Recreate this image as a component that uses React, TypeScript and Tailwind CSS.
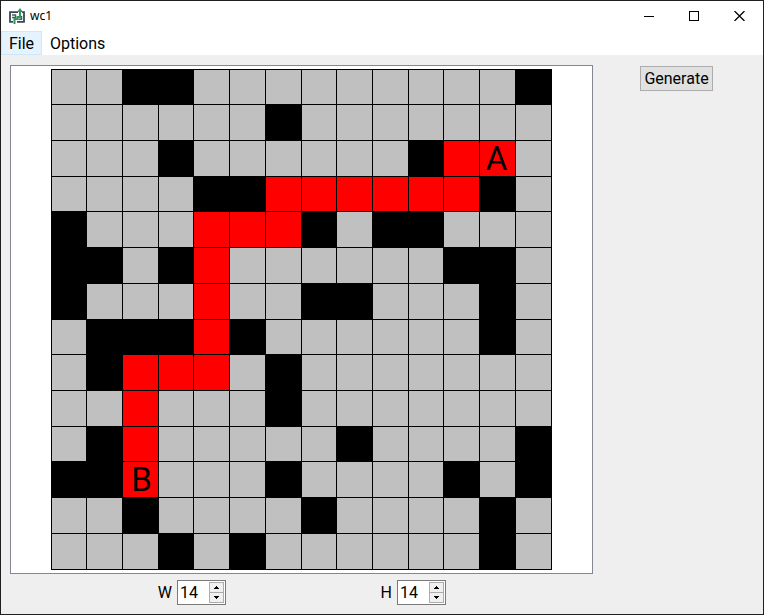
const MAP = [
  '..##.........#',
  '......#.......',
  '...#......#*A.',
  '....##******#.',
  '#...***#.##...',
  '##.#*......##.',
  '#...*..##...#.',
  '.###*#......#.',
  '.#***.#.......',
  '..*...#.......',
  '.#*.....#....#',
  '##B...#....#.#',
  '..#....#....#.',
  '...#.#......#.',
];

function cellColor(c: string) {
  if (c === '#') return 'bg-black';
  if (c === '.') return 'bg-[#c0c0c0]';
  return 'bg-[#ff0000]';
}

function Maze() {
  return (
    <div className="grid h-[501px] w-[501px] border-r border-b border-black grid-cols-[35px_36px_36px_35px_36px_36px_36px_35px_36px_36px_35px_36px_36px_36px] grid-rows-[35px_36px_36px_35px_36px_36px_36px_35px_36px_36px_35px_36px_36px_36px]">
      {MAP.flatMap((row, y) =>
        row.split('').map((c, x) => (
          <div
            key={`${x}-${y}`}
            className={`flex items-center justify-center border-t border-l border-black text-[33px] leading-none ${cellColor(c)} ${c === 'B' ? 'pl-[2px]' : ''} ${c === 'A' ? 'pr-[2px]' : ''}`}
          >
            {/[AB]/.test(c) ? c : null}
          </div>
        )),
      )}
    </div>
  );
}

function Spin({ label }: { label: string }) {
  return (
    <div className="flex items-center">
      <span className="w-[20px] pr-[5px] text-right text-base leading-none">{label}</span>
      <div className="flex h-[25px] w-[49px] border border-[#7a7a7a] bg-white p-px">
        <span className="flex flex-1 items-center pl-px text-base leading-none">14</span>
        <div className="flex w-[15px] flex-col">
          <div className="flex h-[11px] items-center justify-center border border-[#acacac] bg-[#f0f0f0]">
            <svg width="5" height="3" shapeRendering="crispEdges">
              <path d="M2 0h1v1h1v1h1v1H0V2h1V1h1z" />
            </svg>
          </div>
          <div className="-mt-px flex h-[11px] items-center justify-center border border-[#acacac] bg-[#f0f0f0]">
            <svg width="5" height="3" shapeRendering="crispEdges">
              <path d="M0 0h5v1H4v1H3v1H2V2H1V1H0z" />
            </svg>
          </div>
        </div>
      </div>
    </div>
  );
}

function AppIcon() {
  return (
    <svg width="16" height="16" viewBox="0 0 16 16" fill="none">
      <path d="M9 4.2H1V13.8H4M8 13.8H15V4.2H13" stroke="#34494f" strokeWidth="1.8" />
      <path d="M3 7H6.5V9.5H3M9.5 11.3H12.5V8" stroke="#456067" strokeWidth="1.5" />
      <path d="M5.5 16V11H8.5V9H11V3" stroke="#31955a" strokeWidth="2" />
      <path d="M8 4L11 0L14 4Z" fill="#31955a" />
    </svg>
  );
}

export default function App() {
  return (
    <div className="flex h-[615px] w-[764px] flex-col border border-[#202020] bg-[#efefef] font-[Roboto,sans-serif] text-black">
      <header className="flex h-[30px] shrink-0 items-center bg-white pl-2">
        <AppIcon />
        <span className="ml-[5px] font-['Noto_Sans',sans-serif] text-xs leading-none">wc1</span>
        <div className="ml-auto flex">
          <div className="flex w-[46px] items-center justify-center">
            <svg width="10" height="10" shapeRendering="crispEdges">
              <path d="M0 5h10v1H0z" />
            </svg>
          </div>
          <div className="flex w-[44px] items-center justify-center">
            <svg width="10" height="10" fill="none" stroke="black" shapeRendering="crispEdges">
              <path d="M.5 .5h9v9h-9z" />
            </svg>
          </div>
          <div className="flex w-[47px] items-center justify-center">
            <svg width="11" height="10" fill="none" stroke="black" strokeWidth="1.3">
              <path d="M.5 0L10.5 10M10.5 0L.5 10" />
            </svg>
          </div>
        </div>
      </header>
      <nav className="flex h-6 shrink-0 bg-white text-base leading-none">
        <div className="flex w-[41px] items-center justify-center border border-[#cce8ff] bg-[#e5f3ff] pt-[2px]">File</div>
        <div className="flex items-center pt-[2px] pl-2">Options</div>
      </nav>
      <main className="flex flex-1 pt-[10px] pl-[9px]">
        <section className="flex w-[583px] flex-col">
          <div className="h-[509px] shrink-0 border border-[#828790] bg-white pt-[3px] pl-[40px]">
            <Maze />
          </div>
          <div className="flex gap-[151px] pt-[6px] pl-[147px]">
            <Spin label="W" />
            <Spin label="H" />
          </div>
        </section>
        <aside className="pt-px pl-[47px]">
          <button className="flex h-[25px] w-[73px] items-center justify-center border border-[#adadad] bg-[#e1e1e1] text-base leading-none">
            Generate
          </button>
        </aside>
      </main>
    </div>
  );
}
